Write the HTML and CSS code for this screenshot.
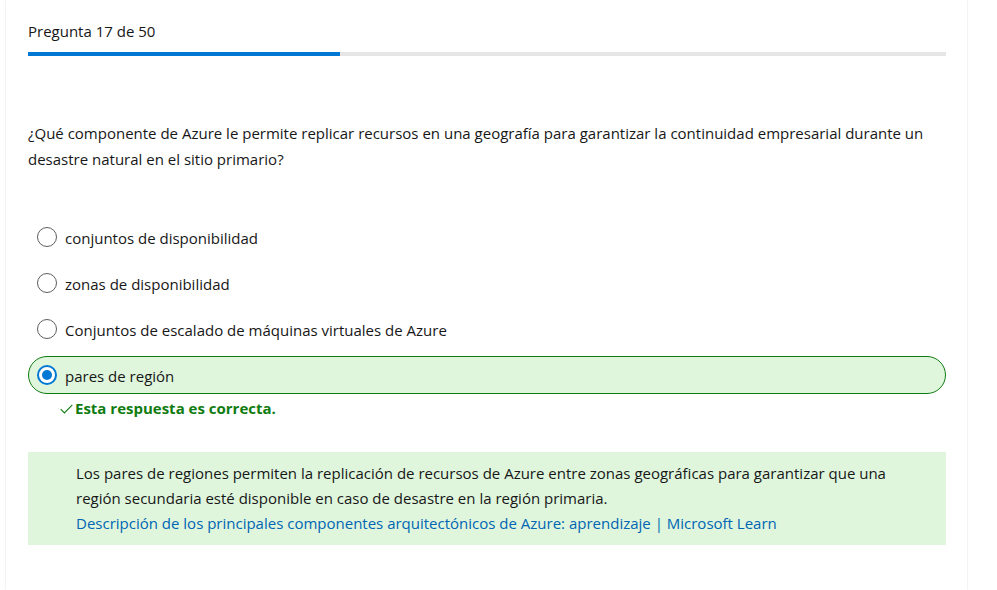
FILE: index.html
```html
<!DOCTYPE html>
<html lang="es">
<head>
<meta charset="utf-8">
<title>Pregunta 17 de 50</title>
<link rel="stylesheet" href="styles.css">
</head>
<body>
<main class="card">
  <div class="header">
    <div class="counter">Pregunta 17 de 50</div>
    <div class="progress"><div class="progress-fill" style="width:34%"></div></div>
  </div>
  <p class="question">¿Qué componente de Azure le permite replicar recursos en una geografía para garantizar la continuidad empresarial durante un desastre natural en el sitio primario?</p>
  <div class="options">
    <label class="option"><span class="radio"></span><span>conjuntos de disponibilidad</span></label>
    <label class="option"><span class="radio"></span><span>zonas de disponibilidad</span></label>
    <label class="option"><span class="radio"></span><span>Conjuntos de escalado de máquinas virtuales de Azure</span></label>
    <label class="option selected"><span class="radio checked"></span><span>pares de región</span></label>
  </div>
  <div class="feedback"><svg class="check" width="13" height="10" viewBox="0 0 13 10"><path d="M0.7 5.2 L4.4 8.9 L12.3 0.8" fill="none" stroke="#107c10" stroke-width="1.1"/></svg>Esta respuesta es correcta.</div>
  <div class="explanation">
    <p>Los pares de regiones permiten la replicación de recursos de Azure entre zonas geográficas para garantizar que una región secundaria esté disponible en caso de desastre en la región primaria.</p>
    <p><a href="#">Descripción de los principales componentes arquitectónicos de Azure: aprendizaje | Microsoft Learn</a></p>
  </div>
</main>
</body>
</html>
```
FILE: styles.css
```css
html, body {
  margin: 0;
  padding: 0;
  background: #ffffff;
}
body {
  font-family: "Open Sans", "Noto Sans", sans-serif;
  font-size: 15px;
  color: #171717;
  height: 590px;
  overflow: hidden;
}
.card {
  margin-left: 6px;
  width: 961px;
  height: 590px;
  box-sizing: border-box;
  padding: 20px 21px 0 22px;
  background: #fff;
  box-shadow: 0 0 2px rgba(0,0,0,0.12), 0 0 1px rgba(0,0,0,0.06);
}
.header {
  display: flex;
  flex-direction: column;
  gap: 10px;
}
.counter {
  line-height: 22px;
}
.progress {
  height: 4px;
  background: #e6e6e6;
}
.progress-fill {
  height: 4px;
  background: #0078d4;
}
.question {
  margin: 64px 0 0;
  line-height: 26px;
  padding-right: 10px;
}
.options {
  margin-top: 46px;
  display: flex;
  flex-direction: column;
  gap: 8px;
}
.option {
  display: flex;
  align-items: center;
  gap: 8px;
  height: 38px;
  padding: 0 8px;
  box-sizing: border-box;
  border: 1px solid transparent;
  border-radius: 19px;
}
.option span:last-child {
  padding-top: 1px;
}
.option.selected {
  background: #dff6dd;
  border-color: #107c10;
}
.radio {
  width: 20px;
  height: 20px;
  border: 1px solid #605e5c;
  border-radius: 50%;
  box-sizing: border-box;
  background: #fff;
  flex: none;
  display: flex;
  align-items: center;
  justify-content: center;
}
.radio.checked {
  border: 2px solid #0078d4;
}
.radio.checked::after {
  content: "";
  width: 10px;
  height: 10px;
  border-radius: 50%;
  background: #0078d4;
}
.feedback {
  display: flex;
  align-items: center;
  margin: 2px 0 0 32px;
  color: #107c10;
  font-weight: 700;
  line-height: 24px;
}
.check {
  margin-right: 2px;
  margin-top: 1px;
}
.explanation {
  margin-top: 32px;
  background: #dff6dd;
  padding: 9px 20px 9px 48px;
}
.explanation p {
  margin: 0;
  line-height: 25px;
}
.explanation a {
  color: #0065b3;
  text-decoration: none;
}
```
